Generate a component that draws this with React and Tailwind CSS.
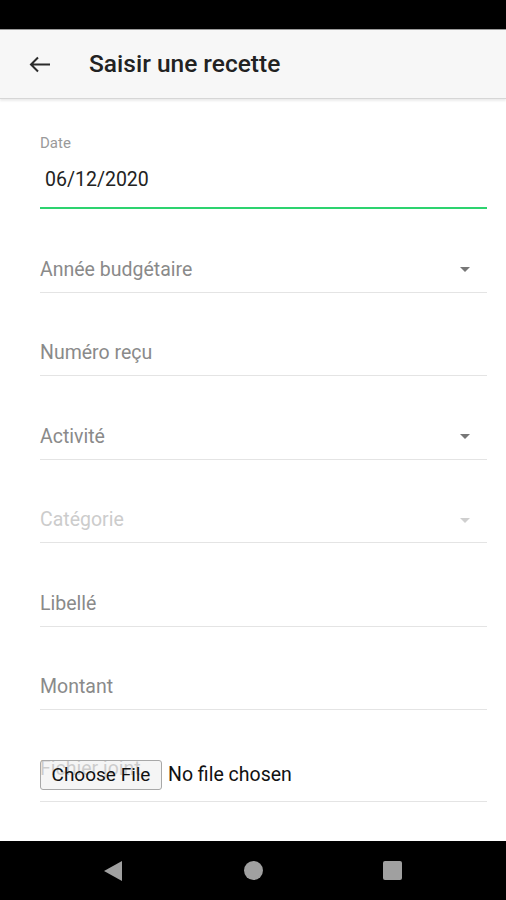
import React from "react";

const Caret = ({ light }) => (
  <svg width="10" height="5" viewBox="0 0 10 5" className="shrink-0">
    <path d="M0 0h10L5 5z" fill={light ? "#cfcfcf" : "#777"} />
  </svg>
);

const Field = ({ label, select, disabled }) => (
  <div className="flex items-center pt-[48.5px] pb-[10px] border-b border-[#e4e4e4]">
    <span
      className={`flex-1 text-[19.5px] leading-6 ${disabled ? "text-[#cccccc]" : "text-[#8a8a8a]"}`}
    >
      {label}
    </span>
    {select && (
      <span className="mr-[17px]">
        <Caret light={disabled} />
      </span>
    )}
  </div>
);

export default function App() {
  return (
    <div
      className="w-[506px] h-[900px] flex flex-col bg-white overflow-hidden"
      style={{ fontFamily: "Roboto, 'Noto Sans', sans-serif" }}
    >
      {/* status bar */}
      <div className="h-[29px] bg-black shrink-0" />
      <div className="h-px bg-[#9a9a9a] shrink-0" />

      {/* toolbar */}
      <div className="h-[69px] shrink-0 bg-[#f7f7f7] flex items-center border-b border-[#d6d6d6] shadow-[0_2px_2px_rgba(0,0,0,0.08)] z-10">
        <svg width="22" height="17" viewBox="0 0 22 17" className="ml-[29px]">
          <path
            d="M21 8.5H2M9 1.5L2 8.5l7 7"
            fill="none"
            stroke="#2b2b2b"
            strokeWidth="2"
          />
        </svg>
        <span className="ml-[38px] text-[24.5px] font-medium text-[#222] leading-none">
          Saisir une recette
        </span>
      </div>

      {/* form */}
      <div className="flex-1 pl-[40px] pr-[19px]">
        <div className="pt-[36px] pb-[15px] border-b-2 border-[#2dd36f]">
          <div className="text-[15px] leading-4 text-[#9a9a9a]">Date</div>
          <div className="mt-[17px] pl-[5px] text-[19.5px] leading-6 text-[#222]">
            06/12/2020
          </div>
        </div>

        <Field label="Année budgétaire" select />
        <Field label="Numéro reçu" />
        <Field label="Activité" select />
        <Field label="Catégorie" select disabled />
        <Field label="Libellé" />
        <Field label="Montant" />

        <div className="relative flex items-center pt-[50px] pb-[11px] border-b border-[#e4e4e4]">
          <span className="absolute left-0 top-[47px] text-[19.5px] leading-6 text-[#9a9a9a]">
            Fichier joint
          </span>
          <span className="relative h-[30px] w-[122px] flex items-center justify-center border border-[#a8a8a8] rounded-[3px] bg-[#efefef]/60 text-[19px] text-[#111]">
            Choose File
          </span>
          <span className="ml-[6px] text-[19.5px] text-[#111]">No file chosen</span>
        </div>
      </div>

      {/* nav bar */}
      <div className="h-[59px] shrink-0 bg-black flex items-center">
        <svg width="20" height="22" viewBox="0 0 20 22" className="ml-[103px]">
          <path d="M19 1v20L1 11z" fill="#a0a0a0" />
        </svg>
        <div className="ml-[121px] w-[19px] h-[19px] rounded-full bg-[#a0a0a0]" />
        <div className="ml-[120px] w-[19px] h-[19px] rounded-[2px] bg-[#a0a0a0]" />
      </div>
    </div>
  );
}
